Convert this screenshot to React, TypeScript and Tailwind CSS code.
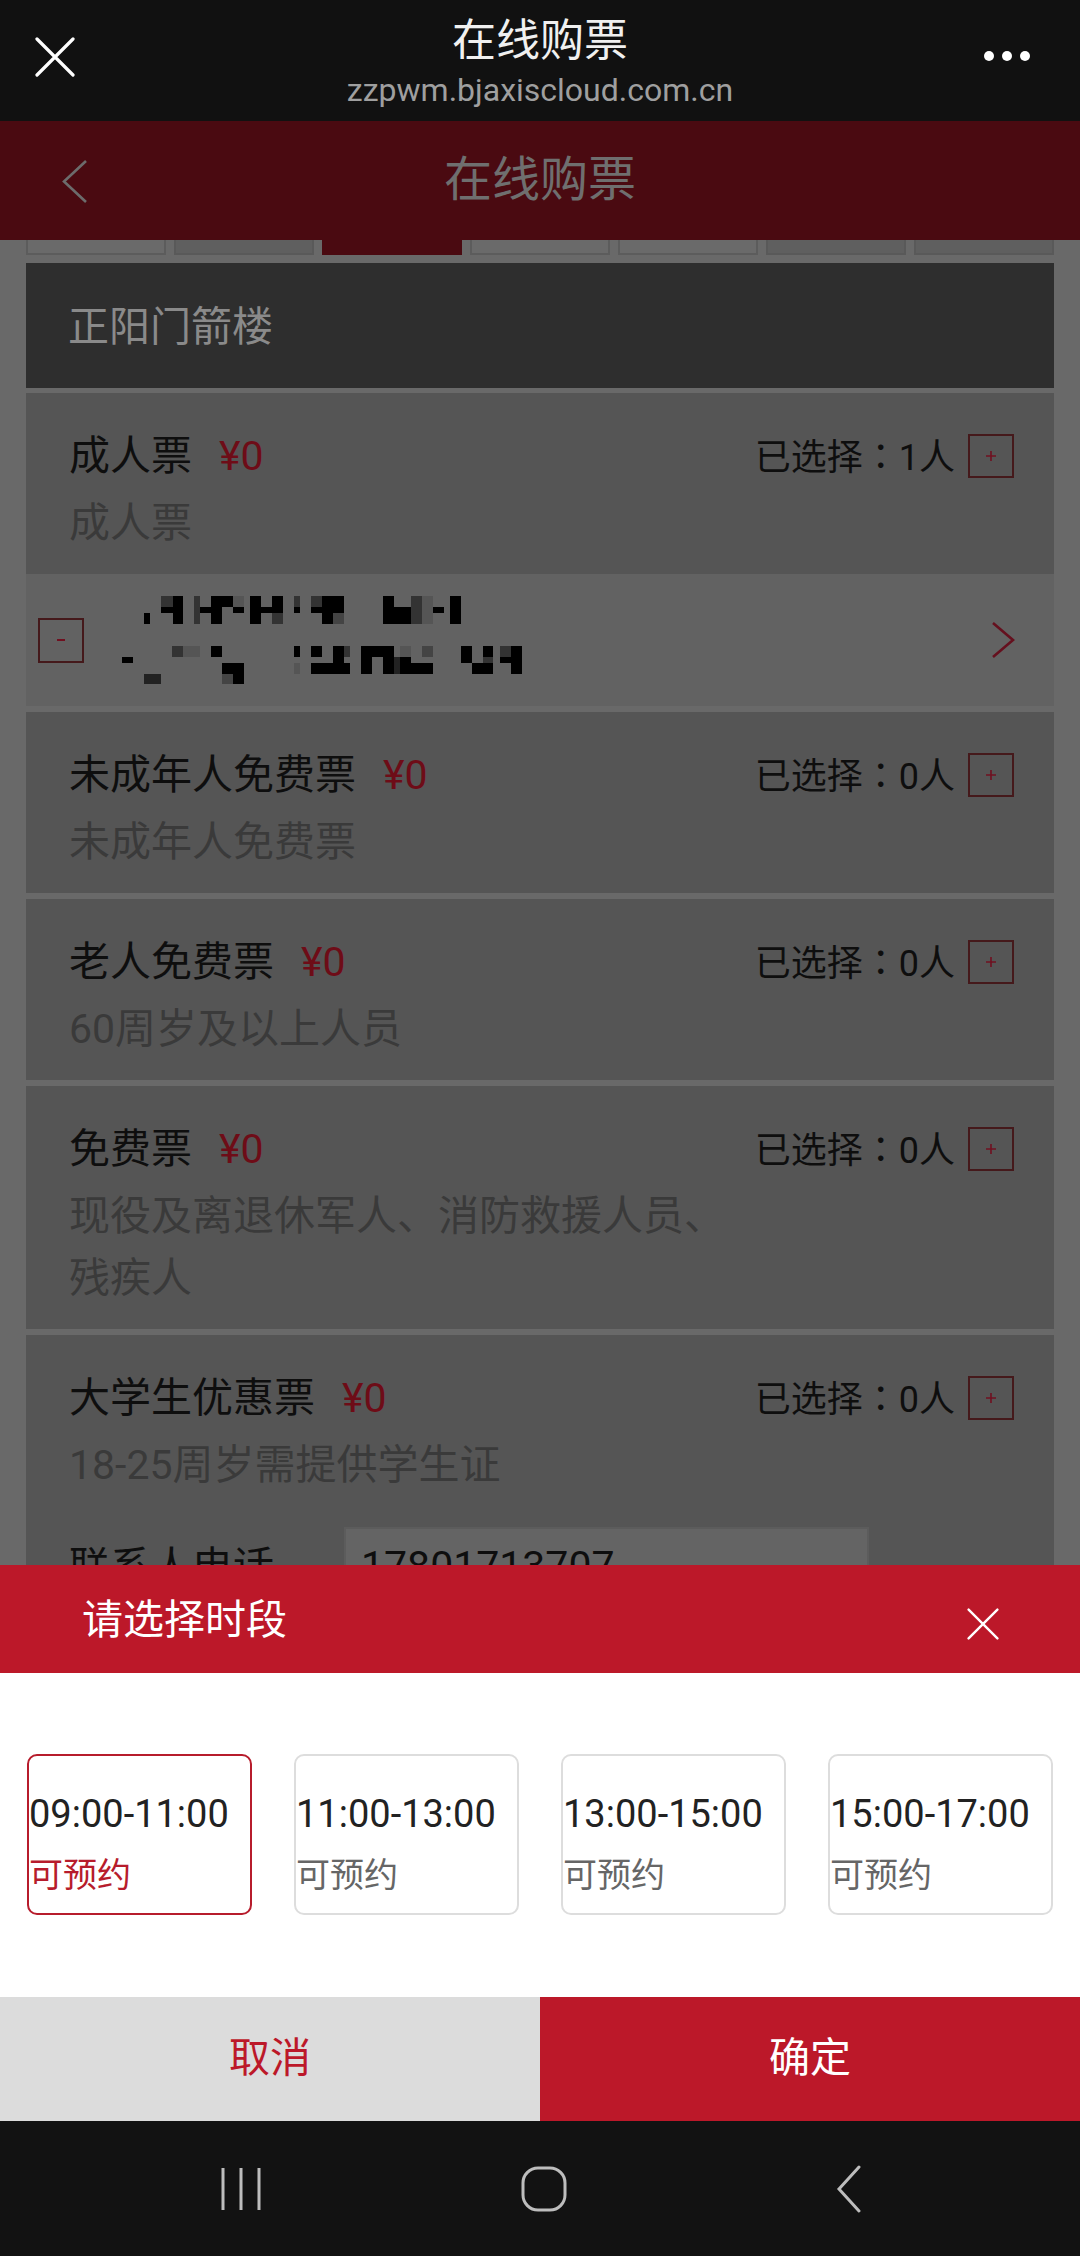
import React from "react";

type Ticket = {
  name: string;
  desc: string;
  count: number;
  passenger?: boolean;
  phone?: boolean;
};

const tickets: Ticket[] = [
  { name: "成人票", desc: "成人票", count: 1, passenger: true },
  { name: "未成年人免费票", desc: "未成年人免费票", count: 0 },
  { name: "老人免费票", desc: "60周岁及以上人员", count: 0 },
  { name: "免费票", desc: "现役及离退休军人、消防救援人员、残疾人", count: 0 },
  { name: "大学生优惠票", desc: "18-25周岁需提供学生证", count: 0, phone: true },
];

const tabs = ["light", "dark", "active", "light", "light", "dark", "dark"];

const slots = ["09:00-11:00", "11:00-13:00", "13:00-15:00", "15:00-17:00"];

// blurred passenger name / id number
const mosaic: [number, number, number, number, string][] = [
  [144, 612, 6, 11, "#000"],
  [161, 595, 12, 11, "#333"],
  [161, 606, 22, 6, "#000"],
  [173, 595, 10, 28, "#000"],
  [194, 595, 6, 28, "#333"],
  [200, 606, 11, 6, "#000"],
  [211, 595, 11, 28, "#000"],
  [222, 595, 11, 11, "#000"],
  [233, 595, 11, 11, "#555"],
  [233, 606, 11, 6, "#000"],
  [250, 595, 11, 28, "#000"],
  [261, 606, 11, 6, "#000"],
  [272, 595, 11, 17, "#000"],
  [272, 612, 11, 11, "#333"],
  [294, 595, 6, 11, "#333"],
  [294, 606, 6, 6, "#000"],
  [311, 595, 11, 11, "#333"],
  [311, 606, 11, 6, "#000"],
  [322, 595, 11, 28, "#000"],
  [333, 595, 11, 17, "#000"],
  [333, 612, 11, 11, "#444"],
  [383, 595, 11, 28, "#000"],
  [394, 606, 17, 17, "#000"],
  [411, 595, 11, 28, "#333"],
  [422, 595, 11, 28, "#555"],
  [433, 606, 11, 6, "#000"],
  [450, 595, 11, 28, "#000"],
  [122, 656, 11, 6, "#000"],
  [144, 673, 17, 10, "#222"],
  [172, 645, 11, 11, "#333"],
  [183, 645, 17, 11, "#555"],
  [211, 645, 11, 11, "#000"],
  [222, 662, 22, 11, "#000"],
  [222, 673, 11, 10, "#444"],
  [233, 673, 11, 10, "#000"],
  [294, 645, 6, 11, "#000"],
  [294, 662, 6, 11, "#555"],
  [311, 645, 11, 11, "#000"],
  [333, 645, 11, 17, "#000"],
  [311, 662, 39, 11, "#000"],
  [344, 645, 6, 11, "#333"],
  [361, 645, 33, 11, "#000"],
  [361, 656, 11, 17, "#000"],
  [383, 656, 11, 17, "#000"],
  [394, 656, 6, 17, "#222"],
  [400, 656, 11, 6, "#000"],
  [400, 662, 33, 11, "#000"],
  [400, 645, 11, 11, "#555"],
  [422, 645, 11, 11, "#444"],
  [461, 645, 11, 17, "#000"],
  [472, 662, 21, 11, "#000"],
  [483, 645, 10, 11, "#000"],
  [483, 656, 10, 6, "#333"],
  [500, 645, 11, 11, "#333"],
  [500, 656, 11, 6, "#000"],
  [511, 645, 11, 28, "#000"],
];

const Cross = ({ size, stroke, width }: { size: number; stroke: string; width: number }) => (
  <svg width={size} height={size} viewBox="0 0 40 40">
    <path d="M2 2 L38 38 M38 2 L2 38" stroke={stroke} strokeWidth={width} strokeLinecap="round" fill="none" />
  </svg>
);

const TicketCard = ({ t }: { t: Ticket }) => (
  <>
    <div className="mt-[6px] bg-[#555555] pt-[32px] pb-[20px] pl-[43px] pr-[40px] first:mt-[5px]">
      <div className="flex h-[62px] items-center">
        <span className="text-[41px] leading-[62px] text-[#0e0e0e]">{t.name}</span>
        <span className="ml-[27px] text-[41px] leading-[62px] text-[#6e0c17]">¥0</span>
        <span className="ml-auto text-[36px] leading-[62px] text-[#0e0e0e]">
          已选择<span className="font-['Noto_Sans_CJK_JP']">：</span>
          {t.count}人
        </span>
        <span className="ml-[13px] flex h-[44px] w-[46px] items-center justify-center border-2 border-[#45191b]">
          <svg width="12" height="12" viewBox="0 0 12 12">
            <path d="M6 1 V11 M1 6 H11" stroke="#701020" strokeWidth="1.6" />
          </svg>
        </span>
      </div>
      <div className="mt-[5px] max-w-[680px] text-[41px] leading-[62px] text-[#3a3a3a]">{t.desc}</div>
      {t.phone && (
        <div className="mt-[31px] flex h-[80px] items-center pb-[40px] box-content">
          <span className="w-[275px] text-[41px] leading-[80px] text-[#0e0e0e]">联系人电话</span>
          <span className="flex h-[80px] w-[525px] items-center border-2 border-[#5c5c5c] bg-[#646464] pl-[15px] text-[41px] text-[#0e0e0e]">
            17801713707
          </span>
        </div>
      )}
    </div>
    {t.passenger && (
      <div className="flex h-[132px] items-center bg-[#626262] pl-[12px] pr-[38px]">
        <span className="flex h-[45px] w-[46px] items-center justify-center border-2 border-[#45191b]">
          <span className="h-[2px] w-[8px] bg-[#701020]" />
        </span>
        <svg className="ml-[38px]" width="400" height="88" viewBox="122 595 400 88">
          {mosaic.map(([x, y, w, h, c], i) => (
            <rect key={i} x={x} y={y} width={w} height={h} fill={c} />
          ))}
        </svg>
        <svg className="ml-auto" width="26" height="38" viewBox="0 0 26 38">
          <path d="M3 2 L23 19 L3 36" stroke="#65101e" strokeWidth="2.6" fill="none" />
        </svg>
      </div>
    )}
  </>
);

export default function App() {
  return (
    <div className="flex h-[2256px] w-[1080px] flex-col overflow-hidden bg-[#696969] font-['Roboto','Noto_Sans_CJK_SC',sans-serif]">
      {/* wechat title bar */}
      <div className="grid h-[121px] shrink-0 grid-cols-[200px_1fr_200px] bg-[#111111]">
        <div className="ml-[35px] mt-[37px]">
          <Cross size={40} stroke="#ffffff" width={3.2} />
        </div>
        <div className="flex flex-col items-center">
          <div className="mt-[16px] text-[44px] leading-[50px] text-[#f0f0f0]">在线购票</div>
          <div className="mt-[6px] text-[32px] leading-[36px] text-[#9f9f9f]">zzpwm.bjaxiscloud.com.cn</div>
        </div>
        <div className="mr-[50px] mt-[51px] flex justify-end gap-[8px]">
          <span className="h-[10px] w-[10px] rounded-full bg-white" />
          <span className="h-[10px] w-[10px] rounded-full bg-white" />
          <span className="h-[10px] w-[10px] rounded-full bg-white" />
        </div>
      </div>

      {/* page under the overlay */}
      <div className="flex h-[1444px] shrink-0 flex-col overflow-hidden">
        <div className="grid h-[119px] shrink-0 grid-cols-[200px_1fr_200px] bg-[#4a0a11]">
          <div className="ml-[61px] mt-[38px]">
            <svg width="27" height="45" viewBox="0 0 27 45">
              <path d="M25 2 L3 22.5 L25 43" stroke="#6c6c6c" strokeWidth="2.6" fill="none" />
            </svg>
          </div>
          <div className="flex items-center justify-center pb-[2px] text-[48px] text-[#6f6f6f]">在线购票</div>
          <div />
        </div>

        <div className="flex h-[15px] shrink-0 gap-[8px] px-[26px]">
          {tabs.map((k, i) => (
            <div
              key={i}
              className={
                k === "active"
                  ? "w-[140px] bg-[#4a0a11]"
                  : k === "dark"
                    ? "w-[140px] border-x-2 border-b-2 border-[#595959] bg-[#5f5f5f]"
                    : "w-[140px] border-x-2 border-b-2 border-[#5c5c5c] bg-[#6a6a6a]"
              }
            />
          ))}
        </div>

        <div className="mx-[26px] flex flex-col">
          <div className="mt-[8px] flex h-[125px] items-center bg-[#2e2e2e] pt-[4px] pl-[42px] text-[41px] text-[#8a8a8a]">
            正阳门箭楼
          </div>
          <div className="flex flex-col">
            {tickets.map((t) => (
              <TicketCard key={t.name} t={t} />
            ))}
          </div>
        </div>
      </div>

      {/* time slot sheet */}
      <div className="flex h-[108px] shrink-0 items-start bg-[#bc1829]">
        <span className="ml-[82px] mt-[24px] text-[41px] leading-[62px] text-white">请选择时段</span>
        <div className="ml-auto mr-[81px] mt-[43px]">
          <Cross size={32} stroke="#ffffff" width={3} />
        </div>
      </div>
      <div className="flex h-[324px] shrink-0 gap-[42px] bg-white px-[27px] pt-[81px]">
        {slots.map((s, i) => (
          <div
            key={s}
            className={
              i === 0
                ? "h-[161px] w-[225px] rounded-[10px] border-2 border-[#b71c2c] pt-[28px]"
                : "h-[161px] w-[225px] rounded-[10px] border-2 border-[#dddddd] pt-[28px]"
            }
          >
            <div className="text-[38px] leading-[61px] text-[#222222]">{s}</div>
            <div className={i === 0 ? "text-[34px] leading-[61px] text-[#b71c2c]" : "text-[34px] leading-[61px] text-[#666666]"}>
              可预约
            </div>
          </div>
        ))}
      </div>
      <div className="flex h-[124px] shrink-0">
        <div className="flex w-1/2 items-center justify-center bg-[#dcdcdc] text-[41px] text-[#bc1829]">取消</div>
        <div className="flex w-1/2 items-center justify-center bg-[#bc1829] text-[41px] text-white">确定</div>
      </div>

      {/* android nav bar */}
      <div className="flex h-[135px] shrink-0 items-center bg-[#121212] pl-[221px]">
        <svg width="40" height="46" viewBox="0 0 40 46">
          <path d="M2 2 V44 M20 2 V44 M38 2 V44" stroke="#bdbdbd" strokeWidth="3" />
        </svg>
        <svg className="ml-[260px]" width="46" height="46" viewBox="0 0 46 46">
          <rect x="2" y="2" width="42" height="42" rx="15" stroke="#bdbdbd" strokeWidth="3" fill="none" />
        </svg>
        <svg className="ml-[269px]" width="26" height="48" viewBox="0 0 26 48">
          <path d="M23 2 L3 24 L23 46" stroke="#bdbdbd" strokeWidth="3" fill="none" strokeLinecap="round" />
        </svg>
      </div>
    </div>
  );
}
